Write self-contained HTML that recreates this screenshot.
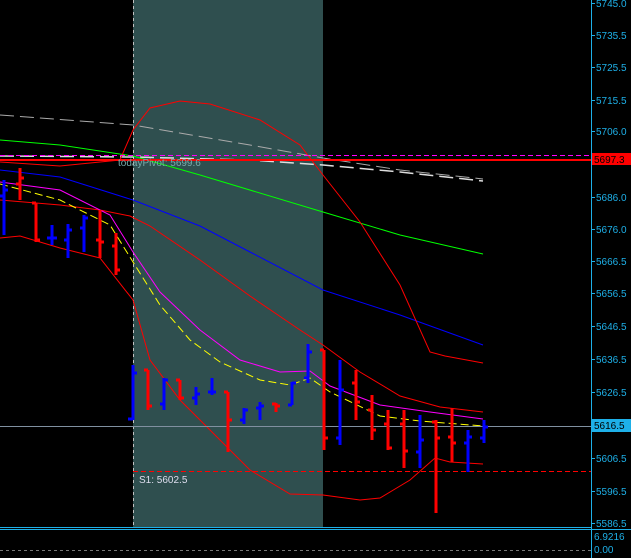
<!DOCTYPE html>
<html><head><meta charset="utf-8"><style>
html,body{margin:0;padding:0;background:#000;width:631px;height:558px;overflow:hidden}
svg{display:block}
text{font-family:"Liberation Sans",sans-serif}
</style></head><body>
<svg width="631" height="558" viewBox="0 0 631 558" xmlns="http://www.w3.org/2000/svg" shape-rendering="crispEdges">
<rect width="631" height="558" fill="#000"/>
<rect x="133" y="0" width="190" height="527" fill="#2F4F4F"/>
<line x1="133.5" y1="0" x2="133.5" y2="527" stroke="#c0c0c0" stroke-dasharray="3,3"/>
<g shape-rendering="auto">
<polyline fill="none" stroke="#ddd" stroke-width="1.5" stroke-dasharray="14,6" points="0,156 133,157 250,160 323,165 400,172 483,181"/>
<polyline fill="none" stroke="#aaa" stroke-width="1" stroke-dasharray="14,6" points="0,115 133,125 250,145 323,158 400,170 483,179"/>
<polyline fill="none" stroke="#00ff00" points="0,140 60,145 133,156 200,175 323,212 400,235 483,254"/>
<polyline fill="none" stroke="#0000ff" points="0,170 60,177 133,200 200,226 250,252 323,290 400,315 483,345"/>
<polyline fill="none" stroke="#ff0000" points="0,162 60,166 120,160 133,130 150,108 180,101 210,104 260,120 300,145 323,175 360,222 400,285 430,352 445,356 483,363"/>
<polyline fill="none" stroke="#ff0000" points="0,200 60,205 100,210 130,216 150,226 200,260 250,296 300,330 323,345 360,372 400,396 440,407 483,412"/>
<polyline fill="none" stroke="#ff0000" points="0,238 20,236 60,248 100,258 133,300 150,360 180,400 220,440 250,470 290,494 323,495 360,500 380,498 410,480 435,458 450,462 483,464"/>
<polyline fill="none" stroke="#ffff00" stroke-dasharray="8,4" points="0,184 60,200 110,225 133,262 160,305 190,340 220,362 260,380 290,385 310,378 330,392 380,416 420,421 483,426"/>
<polyline fill="none" stroke="#ff00ff" points="0,182 60,190 110,215 133,252 160,292 200,330 240,360 280,372 310,371 330,386 380,405 430,412 483,419"/>
</g>
<line x1="0" y1="155.5" x2="591" y2="155.5" stroke="#ff00ff" stroke-dasharray="5,3"/>
<line x1="0" y1="160" x2="591" y2="160" stroke="#ff0000" stroke-width="2"/>
<line x1="0" y1="426.5" x2="591" y2="426.5" stroke="#8090a0"/>
<line x1="133" y1="471.5" x2="591" y2="471.5" stroke="#ff0000" stroke-dasharray="5,3"/>
<text x="118" y="166" font-size="10" fill="#7aa">todayPivot: 5699.6</text>
<text x="139" y="483" font-size="10" fill="#dde">S1: 5602.5</text>
<g stroke-width="3" fill="none">
<path stroke="#0000ff" d="M4,180V235M4,196h-4M4,190h4"/>
<path stroke="#ff0000" d="M20,168V200M20,184h-4M20,178h4"/>
<path stroke="#ff0000" d="M36,203V242M36,203h-4M36,240h4"/>
<path stroke="#0000ff" d="M52,225V245M52,238h-5M52,238h5"/>
<path stroke="#0000ff" d="M68,224V258M68,240h-4M68,230h4"/>
<path stroke="#0000ff" d="M84,215V252M84,228h-4M84,218h4"/>
<path stroke="#ff0000" d="M100,210V258M100,240h-4M100,242h4"/>
<path stroke="#ff0000" d="M116,233V275M116,246h-4M116,270h4"/>
<path stroke="#0000ff" d="M133,365V420M133,419h-5M133,373h4"/>
<path stroke="#ff0000" d="M148,370V410M148,370h-4M148,406h4"/>
<path stroke="#0000ff" d="M164,378V410M164,404h-4M164,380h4"/>
<path stroke="#ff0000" d="M180,380V400M180,380h-4M180,398h4"/>
<path stroke="#0000ff" d="M196,387V405M196,398h-4M196,394h4"/>
<path stroke="#0000ff" d="M212,378V395M212,392h-4M212,392h4"/>
<path stroke="#ff0000" d="M228,392V452M228,392h-4M228,420h4"/>
<path stroke="#0000ff" d="M244,408V424M244,420h-4M244,410h4"/>
<path stroke="#0000ff" d="M260,402V420M260,408h-4M260,406h4"/>
<path stroke="#ff0000" d="M276,403V412M276,404h-4M276,406h4"/>
<path stroke="#0000ff" d="M292,382V405M292,405h-4M292,383h4"/>
<path stroke="#0000ff" d="M308,344V383M308,378h-4M308,352h4"/>
<path stroke="#ff0000" d="M324,350V450M324,350h-4M324,438h4"/>
<path stroke="#0000ff" d="M340,360V445M340,438h-4M340,390h4"/>
<path stroke="#ff0000" d="M356,370V420M356,383h-4M356,402h4"/>
<path stroke="#ff0000" d="M372,395V440M372,410h-4M372,430h4"/>
<path stroke="#ff0000" d="M388,410V450M388,424h-4M388,448h4"/>
<path stroke="#ff0000" d="M404,410V468M404,424h-4M404,451h4"/>
<path stroke="#0000ff" d="M420,415V468M420,452h-4M420,440h4"/>
<path stroke="#ff0000" d="M436,420V513M436,422h-4M436,438h4"/>
<path stroke="#ff0000" d="M452,408V462M452,437h-4M452,443h4"/>
<path stroke="#0000ff" d="M468,430V472M468,443h-4M468,437h4"/>
<path stroke="#0000ff" d="M484,420V443M484,438h-4M484,427h4"/>
</g>
<line x1="591.5" y1="0" x2="591.5" y2="558" stroke="#1EB0E8"/>
<g fill="#1EB0E8" font-size="10">
<g stroke="#1EB0E8"><path d="M591,3.5h4M591,35.5h4M591,67.5h4M591,100.5h4M591,131.5h4M591,197.5h4M591,229.5h4M591,261.5h4M591,293.5h4M591,326.5h4M591,359.5h4M591,392.5h4M591,458.5h4M591,491.5h4M591,523.5h4"/></g>
<text x="596" y="7">5745.0</text><text x="596" y="39">5735.5</text><text x="596" y="71">5725.5</text><text x="596" y="104">5715.5</text><text x="596" y="135">5706.0</text><text x="596" y="201">5686.0</text><text x="596" y="233">5676.0</text><text x="596" y="265">5666.5</text><text x="596" y="297">5656.5</text><text x="596" y="330">5646.5</text><text x="596" y="363">5636.5</text><text x="596" y="396">5626.5</text><text x="596" y="462">5606.5</text><text x="596" y="495">5596.5</text><text x="596" y="527">5586.5</text>
<text x="594" y="540">6.9216</text><text x="594" y="553">0.00</text>
</g>
<rect x="592" y="153" width="39" height="12" fill="#ff0000"/>
<text x="594" y="163" font-size="10" fill="#000">5697.3</text>
<rect x="592" y="419" width="39" height="13" fill="#1EB0E8"/>
<text x="594" y="429" font-size="10" fill="#000">5616.5</text>
<line x1="0" y1="527.5" x2="591" y2="527.5" stroke="#1EB0E8"/>
<line x1="0" y1="529.5" x2="631" y2="529.5" stroke="#1EB0E8"/>
<line x1="0" y1="550.5" x2="591" y2="550.5" stroke="#777" stroke-dasharray="3,3"/>
</svg>
</body></html>
